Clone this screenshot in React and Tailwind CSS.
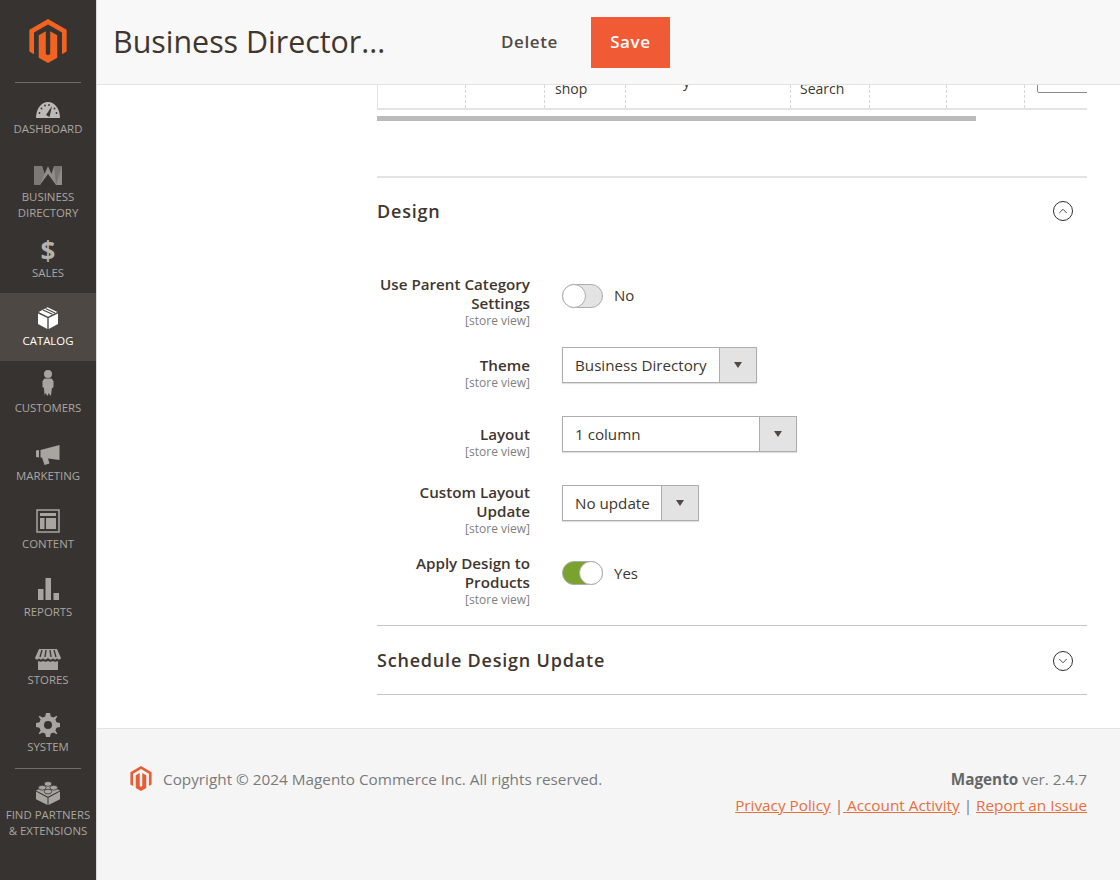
import React from 'react';
import { ChevronUp, ChevronDown } from 'lucide-react';

const Logo = ({ className }) => (
  <svg viewBox="0 0 40 46" className={className} fill="currentColor">
    <path d="M20 0 L39.500 11.300 V34 L34.600 36.800 V14.100 L20 5.700 L5.400 14.100 V36.800 L.5 34 V11.300 Z" />
    <path d="M10.300 17 L17.700 12.800 V36.600 L20 38 L22.300 36.600 V12.800 L29.700 17 V40.500 L20 46 L10.300 40.500 Z" />
  </svg>
);

const Gauge = () => (
  <svg viewBox="0 0 24 16" className="w-[24px] h-[16px]">
    <path d="M0 16 C0 7 5 0 12 0 C19 0 24 7 24 16 Z" fill="#bdbab6" />
    <path d="M10 13 L16 4 L13.500 15 Z" fill="#373330" />
    <g fill="#373330">
      <circle cx="3.500" cy="11" r=".9" /><circle cx="5.500" cy="6.500" r=".9" /><circle cx="9" cy="3.500" r=".9" /><circle cx="13" cy="3" r=".9" /><circle cx="20.500" cy="11" r=".9" /><circle cx="18.500" cy="6.500" r=".9" />
    </g>
  </svg>
);

const Wing = () => (
  <svg viewBox="0 0 28 19" className="w-[28px] h-[19px]">
    <path d="M0 0 H8 L10.500 8 L14 0 L17.500 8 L20 0 H28 V19 H22 L14 8 L6 19 H0 Z" fill="#8f8c89" />
    <path d="M0 0 H8 L10.500 8 L6 19 H0 Z" fill="#7b7875" />
    <path d="M20 0 H28 L22 19 Z" fill="#777471" />
  </svg>
);

const Box = () => (
  <svg viewBox="0 0 20 22" className="w-[20px] h-[22px]" fill="#fff">
    <path d="M0 6.500 L9.300 11 V22 L0 17 Z" />
    <path d="M20 6.500 L10.700 11 V22 L20 17 Z" />
    <path d="M.6 5 L9.500 .3 L19.400 5 L10 9.800 Z" />
    <path d="M5 2.900 L14.500 7.300 M7.500 1.600 L17 6" stroke="#4a4542" strokeWidth="1.100" />
  </svg>
);

const Person = () => (
  <svg viewBox="0 0 12 26" className="w-[12px] h-[26px]" fill="#a8a5a1">
    <circle cx="6" cy="4" r="4" />
    <path d="M2.500 8.500 H9.500 L11.500 11 V17 L9.800 18.500 L9 26 L6.500 23 L6 26 L3 23 L2.500 26 L2 18 L.5 17 V11 Z" />
  </svg>
);

const Horn = () => (
  <svg viewBox="0 0 24 20" className="w-[24px] h-[20px]" fill="#a8a5a1">
    <path d="M0 5.500 L3 5 V12.500 L0 12 Z" />
    <path d="M4.500 5 L23.500 0 V15 L12 13.500 L13.500 18.500 L8.500 20 L6 12.500 L4.500 12.500 Z" />
  </svg>
);

const LayoutIcon = () => (
  <svg viewBox="0 0 24 24" className="w-[24px] h-[24px]" fill="none">
    <rect x="1" y="1" width="22" height="22" stroke="#a8a5a1" strokeWidth="1.500" />
    <path d="M4 4 H20 V7 H4 Z M4 9 H8.500 V20 H4 Z M10 9 H20 V20 H10 Z" fill="#a8a5a1" />
  </svg>
);

const Bars = () => (
  <svg viewBox="0 0 21 22" className="w-[21px] h-[22px]" fill="#a8a5a1">
    <rect x="0" y="11" width="5.500" height="11" />
    <rect x="7.500" y="0" width="5.500" height="22" />
    <rect x="15.500" y="15" width="5.500" height="7" />
  </svg>
);

const Shop = () => (
  <svg viewBox="0 0 26 21" className="w-[26px] h-[21px]" fill="#a8a5a1">
    <path d="M4 0 H22 L26 9 C25 11 23 11 22 9 C21 11 19 11 18 9 C17 11 15 11 13 9 C11 11 9 11 8 9 C7 11 5 11 4 9 C3 11 1 11 0 9 Z" />
    <path d="M7 1 L5 8 M11 1 L10 8 M15 1 L16 8 M19 1 L21 8" stroke="#373330" strokeWidth="1.300" />
    <path d="M3 12 C5 13 7 13 8 12 C10 13 11 13 13 12 C15 13 16 13 18 12 C19 13 21 13 23 12 V21 H3 Z" />
  </svg>
);

const Gear = () => (
  <svg viewBox="0 0 24 24" className="w-[24px] h-[24px]" fill="#a8a5a1">
    <path fillRule="evenodd" d="M10 0 H14 L14.800 3.500 L17.500 4.600 L20.500 2.700 L21.300 3.500 L19.400 6.500 L20.500 9.200 L24 10 V14 L20.500 14.800 L19.400 17.500 L21.300 20.500 L20.500 21.300 L17.500 19.400 L14.800 20.500 L14 24 H10 L9.200 20.500 L6.500 19.400 L3.500 21.300 L2.700 20.500 L4.600 17.500 L3.500 14.800 L0 14 V10 L3.500 9.200 L4.600 6.500 L2.700 3.500 L3.500 2.700 L6.500 4.600 L9.200 3.500 Z M12 8 A4 4 0 1 0 12 16 A4 4 0 1 0 12 8 Z" />
  </svg>
);

const Brick = () => (
  <svg viewBox="0 0 25 25" className="w-[24px] h-[24px]" fill="#a8a5a1">
    <path d="M0 11 L12 17.500 V25 L0 19 Z" />
    <path d="M25 11 L13 17.500 V25 L25 19 Z" />
    <path d="M12.500 4 L25 10 L12.500 16.500 L0 10 Z" />
    <ellipse cx="12.500" cy="3" rx="4" ry="2.500" stroke="#373330" strokeWidth=".8" />
    <ellipse cx="6.500" cy="7" rx="4" ry="2.500" stroke="#373330" strokeWidth=".8" />
    <ellipse cx="18.500" cy="7" rx="4" ry="2.500" stroke="#373330" strokeWidth=".8" />
    <ellipse cx="12.500" cy="11" rx="4" ry="2.500" stroke="#373330" strokeWidth=".8" />
  </svg>
);

const navItems = [
  { lines: ['DASHBOARD'], Icon: Gauge, h: 'h-[65px]', pad: 'pt-[12px]', gap: 'mt-[-3px]' },
  { lines: ['BUSINESS', 'DIRECTORY'], Icon: Wing, h: 'h-[76px]', pad: 'pt-[12px]', gap: 'mt-0' },
  { lines: ['SALES'], Icon: null, h: 'h-[68px]', pad: 'pt-[12px]', gap: 'mt-0' },
  { lines: ['CATALOG'], Icon: Box, h: 'h-[68px]', pad: 'pt-[11px]', gap: 'mt-[1px]', active: true },
  { lines: ['CUSTOMERS'], Icon: Person, h: 'h-[68px]', pad: 'pt-[8px]', gap: 'mt-[3px]' },
  { lines: ['MARKETING'], Icon: Horn, h: 'h-[68px]', pad: 'pt-[12px]', gap: 'mt-[-1px]' },
  { lines: ['CONTENT'], Icon: LayoutIcon, h: 'h-[68px]', pad: 'pt-[10px]', gap: 'mt-[1px]' },
  { lines: ['REPORTS'], Icon: Bars, h: 'h-[68px]', pad: 'pt-[10px]', gap: 'mt-[1px]' },
  { lines: ['STORES'], Icon: Shop, h: 'h-[68px]', pad: 'pt-[12px]', gap: 'mt-[-1px]' },
  { lines: ['SYSTEM'], Icon: Gear, h: 'h-[67px]', pad: 'pt-[10px]', gap: 'mt-0' },
];

const NavItem = ({ item }) => {
  const { Icon, lines, active, h, pad, gap } = item;
  return (
    <div className={`${h} ${pad} shrink-0 flex flex-col items-center ${active ? 'bg-[#4d4844] text-white' : 'text-[#aaa6a0]'}`}>
      <div className="h-[28px] shrink-0 flex items-center justify-center">
        {Icon ? <Icon /> : <span className="text-[26px] leading-[28px] font-bold text-[#b5b2ae]">$</span>}
      </div>
      <div className={`${gap} text-[11.4px] leading-[16px] text-center whitespace-nowrap`}>
        {lines.map((l) => <div key={l}>{l}</div>)}
      </div>
    </div>
  );
};

const Sidebar = () => (
  <aside className="w-[97px] shrink-0 h-[880px] bg-[#373330] border-r border-[#d9d9d9] flex flex-col">
    <div className="h-[84px] shrink-0 flex flex-col items-center pt-[19px]">
      <Logo className="w-[40px] h-[44px] text-[#f26322]" />
      <div className="w-[66px] h-px bg-[#736e69] mt-[19px]" />
    </div>
    {navItems.map((item) => <NavItem key={item.lines[0]} item={item} />)}
    <div className="flex flex-col items-center text-[#aaa6a0]">
      <div className="w-[66px] h-px bg-[#736e69] mb-[12px] shrink-0" />
      <Brick />
      <div className="mt-[2px] text-[11.4px] leading-[16px] text-center whitespace-nowrap">
        <div>FIND PARTNERS</div>
        <div>&amp; EXTENSIONS</div>
      </div>
    </div>
  </aside>
);

const Toggle = ({ on }) => (
  <div className={`w-[41px] h-[24px] rounded-full border border-[#adadad] relative shrink-0 ${on ? 'bg-[#79a22e]' : 'bg-[#e3e3e3]'}`}>
    <div className={`absolute top-[-1px] w-[24px] h-[24px] rounded-full bg-white border border-[#adadad] ${on ? 'right-[-1px]' : 'left-[-1px]'}`} />
  </div>
);

const Select = ({ value, width }) => (
  <div className={`${width} h-[36px] flex border border-[#adadad] bg-white shadow-[0_1px_1px_rgba(0,0,0,0.12)]`}>
    <div className="flex-1 pl-[12px] leading-[35px] text-[15.2px] text-[#41362f] whitespace-nowrap">{value}</div>
    <div className="w-[37px] bg-[#e3e3e3] border-l border-[#adadad] flex items-center justify-center">
      <div className="w-0 h-0 border-x-[4.500px] border-x-transparent border-t-[6px] border-t-[#514943]" />
    </div>
  </div>
);

const Label = ({ lines }) => (
  <div className="w-[153px] mr-[32px] shrink-0 text-right">
    {lines.map((l) => (
      <div key={l} className="text-[15.2px] leading-[19px] font-semibold text-[#41362f] whitespace-nowrap">{l}</div>
    ))}
    <div className="text-[12px] leading-[15px] text-[#808080]">[store view]</div>
  </div>
);

const cols = [88, 79, 81, 165, 79, 77, 78, 63];

const TableBottom = () => (
  <div className="h-[36px] overflow-hidden">
    <div className="h-[25px] flex border-l border-b-2 border-[#e3e3e3] text-[14px] text-[#41362f]">
      {cols.map((w, i) => (
        <div
          key={i}
          style={{ width: w }}
          className={`shrink-0 relative overflow-hidden ${i < cols.length - 1 ? 'border-r border-dashed border-[#d6d6d6]' : ''}`}
        >
          {i === 2 && <span className="absolute left-[10px] top-[-6px] leading-[19px]">shop</span>}
          {i === 3 && <span className="absolute left-[57px] top-[-13px] leading-[19px]">y</span>}
          {i === 4 && <span className="absolute left-[9px] top-[-6px] leading-[19px]">Search</span>}
          {i === 7 && <div className="absolute left-[12px] top-[-20px] w-[60px] h-[28px] rounded-bl-[2px] border border-[#8a8a8a] bg-white" />}
        </div>
      ))}
    </div>
    <div className="w-[599px] h-[5px] bg-[#bbbbbb] mt-[6px]" />
  </div>
);

const SectionHead = ({ title, open }) => {
  const Chevron = open ? ChevronUp : ChevronDown;
  return (
    <div className="flex items-center justify-between">
      <h2 className="text-[18px] leading-[24px] font-semibold text-[#41362f] tracking-[0.8px]">{title}</h2>
      <div className={`w-[20px] h-[20px] mr-[14px] rounded-full border-[1.5px] border-[#303030] flex items-center justify-center ${open ? '' : 'mt-[2px]'}`}>
        <Chevron size={14} strokeWidth={1.500} className="text-[#303030]" />
      </div>
    </div>
  );
};

const Header = () => (
  <header className="h-[85px] shrink-0 bg-[#f8f8f8] border-b border-[#e3e3e3] flex items-center pl-[16px] pr-[32px]">
    <h1 className="w-[320px] text-[30.4px] leading-[40px] text-[#41362f] mb-[1px] whitespace-nowrap overflow-hidden">Business Director...</h1>
    <span className="ml-[68px] text-[17px] font-semibold text-[#514943] tracking-[0.6px] mb-[1px]">Delete</span>
    <button className="ml-[33px] w-[79px] h-[51px] pb-[2px] bg-[#f05a35] text-white text-[17px] font-semibold tracking-[0.6px] mt-[1px]">Save</button>
  </header>
);

const Footer = () => (
  <footer className="flex-1 bg-[#f5f5f5] border-t border-[#e3e3e3] pl-[33px] pr-[33px] pt-[37px]">
    <div className="flex justify-between items-start text-[15.3px] leading-[24px] text-[#7a7a7a]">
      <div className="flex items-center gap-[11px]">
        <Logo className="w-[22px] h-[25px] text-[#e85d33]" />
        <span>Copyright © 2024 Magento Commerce Inc. All rights reserved.</span>
      </div>
      <div className="text-right">
        <div className="mt-[1px]"><b className="font-bold text-[#676767]">Magento</b> ver. 2.4.7</div>
        <div className="mt-[2px]">
          <a className="text-[#e7703f] underline">Privacy Policy</a> |<a className="text-[#e7703f] underline"> Account Activity</a> | <a className="text-[#e7703f] underline">Report an Issue</a>
        </div>
      </div>
    </div>
  </footer>
);

const App = () => (
  <div className="flex w-[1120px] h-[880px] overflow-hidden bg-white font-['Open_Sans',sans-serif]">
    <Sidebar />
    <main className="flex-1 flex flex-col min-w-0">
      <Header />
      <div className="h-[643px] shrink-0 pl-[280px] pr-[33px]">
        <TableBottom />
        <div className="mt-[55px] border-t-2 border-[#e3e3e3] pt-[21px]">
          <SectionHead title="Design" open />
        </div>
        <div className="mt-[52px] flex items-start">
          <Label lines={['Use Parent Category', 'Settings']} />
          <div className="flex items-center gap-[11px] mt-[9px]"><Toggle /><span className="text-[15px] text-[#41362f] mb-[2px]">No</span></div>
        </div>
        <div className="mt-[28px] flex items-start">
          <Label lines={['Theme']} />
          <div className="mt-[-9px]"><Select value="Business Directory" width="w-[195px]" /></div>
        </div>
        <div className="mt-[35px] flex items-start">
          <Label lines={['Layout']} />
          <div className="mt-[-9px]"><Select value="1 column" width="w-[235px]" /></div>
        </div>
        <div className="mt-[24px] flex items-start">
          <Label lines={['Custom Layout', 'Update']} />
          <div className="mt-[2px]"><Select value="No update" width="w-[137px]" /></div>
        </div>
        <div className="mt-[18px] flex items-start">
          <Label lines={['Apply Design to', 'Products']} />
          <div className="flex items-center gap-[11px] mt-[7px]"><Toggle on /><span className="text-[15px] text-[#41362f]">Yes</span></div>
        </div>
        <div className="mt-[18px] border-t border-[#c7c7c7] pt-[22px] pb-[22px] border-b">
          <SectionHead title="Schedule Design Update" />
        </div>
      </div>
      <Footer />
    </main>
  </div>
);

export default App;
